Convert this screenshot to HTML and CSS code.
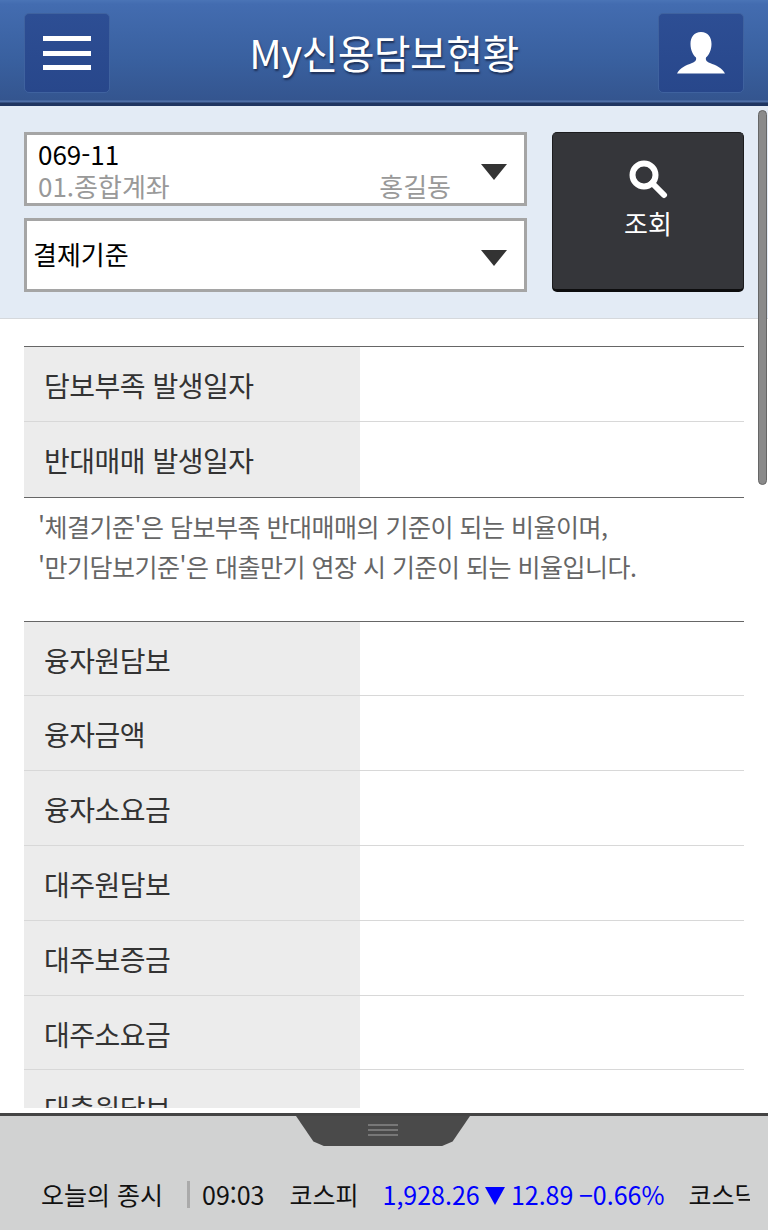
FILE: index.html
```html
<!DOCTYPE html>
<html lang="ko"><head><meta charset="utf-8"><title>My신용담보현황</title>
<link rel="stylesheet" href="styles.css">
</head>
<body>
<div class="app">
  <header class="top-bar">
    <button class="top-button">
      <svg width="48" height="36" viewBox="0 0 48 36"><path d="M0 1h48v5H0zM0 16h48v5H0zM0 30h48v5H0z" fill="#fff"/></svg>
    </button>
    <h1 class="title">My신용담보현황</h1>
    <button class="top-button">
      <svg width="48" height="42" viewBox="0 0 48 42"><path d="M24 0c7 0 10.500 5 10.500 12 0 6-2.500 11-5.500 13.500-.5 2 0 4 4 5.500 6 2.500 12 4.500 15 10.500H0c3-6 9-8 15-10.500 4-1.500 4.500-3.500 4-5.500-3-2.500-5.500-7.500-5.500-13.500C13.500 5 17 0 24 0z" fill="#fff"/></svg>
    </button>
  </header>

  <section class="filter">
    <div class="selects">
      <div class="select account">
        <div class="account-no">069-11</div>
        <div class="account-sub"><span>01.종합계좌</span><span>홍길동</span></div>
        <i class="arrow"></i>
      </div>
      <div class="select basis">결제기준<i class="arrow"></i></div>
    </div>
    <button class="search-button">
      <svg width="40" height="40" viewBox="0 0 40 40"><circle cx="16" cy="16" r="11.500" fill="none" stroke="#fff" stroke-width="6"/><path d="M24 24l12 12" stroke="#fff" stroke-width="6" stroke-linecap="round"/></svg>
      <span>조회</span>
    </button>
  </section>

  <main class="content">
    <div class="info-table">
      <div class="row"><div class="label">담보부족 발생일자</div><div class="value"></div></div>
      <div class="row"><div class="label">반대매매 발생일자</div><div class="value"></div></div>
    </div>
    <p class="note">'체결기준'은 담보부족 반대매매의 기준이 되는 비율이며,<br>'만기담보기준'은 대출만기 연장 시 기준이 되는 비율입니다.</p>
    <div class="info-table">
      <div class="row"><div class="label">융자원담보</div><div class="value"></div></div>
      <div class="row"><div class="label">융자금액</div><div class="value"></div></div>
      <div class="row"><div class="label">융자소요금</div><div class="value"></div></div>
      <div class="row"><div class="label">대주원담보</div><div class="value"></div></div>
      <div class="row"><div class="label">대주보증금</div><div class="value"></div></div>
      <div class="row"><div class="label">대주소요금</div><div class="value"></div></div>
      <div class="row"><div class="label">대출원담보</div><div class="value"></div></div>
    </div>
  </main>

  <footer class="ticker-panel">
    <div class="handle"><span class="grip"></span></div>
    <div class="ticker">
      <span class="ticker-title">오늘의 종시</span>
      <span class="ticker-sep"></span>
      <span class="ticker-time">09:03</span>
      <span class="ticker-name">코스피</span>
      <span class="ticker-value">1,928.26 <i class="down"></i> 12.89 −0.66%</span>
      <span class="ticker-name">코스닥</span>
    </div>
  </footer>

  <div class="scrollbar"></div>
</div>
</body></html>
```

FILE: styles.css
```css
* {
  box-sizing: border-box;
}
body {
  margin: 0;
  background: #fff;
  font-family: 'Noto Sans CJK KR', 'Noto Sans', sans-serif;
  overflow: hidden;
}
.app {
  position: relative;
  width: 768px;
  height: 1230px;
  display: flex;
  flex-direction: column;
  overflow: hidden;
}
.top-bar {
  height: 106px;
  flex: none;
  display: flex;
  align-items: flex-start;
  justify-content: space-between;
  padding: 13px 24px 0;
  background: linear-gradient(#4a74b6 0, #436cb0 4px, #39609f 60px, #34558f 100px, #5273ab 101px, #4a6aa2 102px, #1f3560 103px, #1f3560 106px);
}
.top-button {
  width: 86px;
  height: 80px;
  padding: 0;
  display: flex;
  align-items: center;
  justify-content: center;
  background: linear-gradient(#2d4e94, #28478b);
  border: 1px solid #3f629f;
  border-radius: 5px;
}
.title {
  margin: 7px 0 0;
  font-size: 40px;
  line-height: 64px;
  font-weight: 400;
  letter-spacing: -0.6px;
  color: #fff;
  text-shadow: 1px 2px 2px #1d2f55;
}
.filter {
  height: 213px;
  flex: none;
  display: flex;
  gap: 25px;
  padding: 26px 24px 0;
  background: #e3ebf5;
  border-bottom: 1px solid #d5d8dc;
}
.selects {
  width: 503px;
  display: flex;
  flex-direction: column;
  gap: 12px;
}
.select {
  position: relative;
  height: 74px;
  background: #fff;
  border: 3px solid #a5a5a5;
}
.account {
  padding: 3px 11px;
  font-size: 26px;
  line-height: 32px;
}
.account-no {
  color: #000;
}
.account-sub {
  display: flex;
  justify-content: space-between;
  width: 413px;
  color: #999;
}
.basis {
  display: flex;
  align-items: center;
  padding: 0 6px 4px;
  font-size: 26px;
  color: #000;
}
.arrow {
  position: absolute;
  right: 17px;
  top: 29px;
  border-style: solid;
  border-width: 16px 13px 0;
  border-color: #333 transparent transparent;
}
.account .arrow {
  top: 29px;
}
.search-button {
  width: 192px;
  height: 160px;
  padding: 26px 0 0;
  display: flex;
  flex-direction: column;
  align-items: center;
  justify-content: flex-start;
  gap: 5px;
  background: #35363a;
  border: 1px solid #1c1c1e;
  border-bottom: 3px solid #0d0d0e;
  border-radius: 5px;
  color: #fff;
  font: inherit;
  font-size: 26px;
  line-height: 38px;
}
.content {
  height: 789px;
  flex: none;
  padding: 27px 24px 0;
  overflow: hidden;
}
.info-table {
  border-top: 1px solid #666;
}
.info-table:first-child {
  border-bottom: 1px solid #666;
}
.row {
  display: flex;
  height: 74.800px;
  border-bottom: 1px solid #d8d8d8;
}
.row:last-child {
  border-bottom: none;
}
.label {
  width: 336px;
  padding: 16px 20px 0;
  background: #ececec;
  font-size: 28px;
  line-height: 44px;
  letter-spacing: -0.5px;
  color: #333;
}
.value {
  flex: 1;
}
.note {
  height: 123px;
  margin: 0;
  padding: 8px 14px 0;
  font-size: 25px;
  line-height: 40px;
  letter-spacing: -0.5px;
  color: #666;
}
.ticker-panel {
  height: 117px;
  flex: none;
  margin-top: 5px;
  background: #d1d2d2;
  border-top: 3px solid #444;
}
.handle {
  width: 174px;
  height: 30px;
  margin: 0 auto;
  position: relative;
  left: -1px;
  display: flex;
  justify-content: center;
  padding-top: 8px;
  background: #4a4a4a;
  clip-path: polygon(0 0, 100% 0, 90% 85%, 84% 100%, 16% 100%, 10% 85%);
}
.grip {
  width: 30px;
  height: 12px;
  border-top: 2px solid #777;
  border-bottom: 2px solid #777;
  background: linear-gradient(transparent 3px, #777 3px, #777 5px, transparent 5px);
}
.ticker {
  display: flex;
  align-items: center;
  width: 750px;
  margin-top: 30px;
  padding-left: 41px;
  overflow: hidden;
  white-space: nowrap;
  font-size: 25px;
  line-height: 36px;
  color: #111;
}
.ticker > span {
  flex: none;
}
.ticker-sep {
  width: 3px;
  height: 27px;
  margin: 0 12px 0 24px;
  background: #aaa;
}
.ticker-time {
  margin-right: 25px;
}
.ticker-value {
  margin: 0 24px;
  color: #00f;
}
.down {
  display: inline-block;
  border-style: solid;
  border-width: 18px 10px 0;
  border-color: #00f transparent transparent;
}
.scrollbar {
  position: absolute;
  left: 758px;
  top: 110px;
  width: 9px;
  height: 375px;
  background: #8a8a8a;
  border: 1px solid #666;
  border-radius: 5px;
}
```
